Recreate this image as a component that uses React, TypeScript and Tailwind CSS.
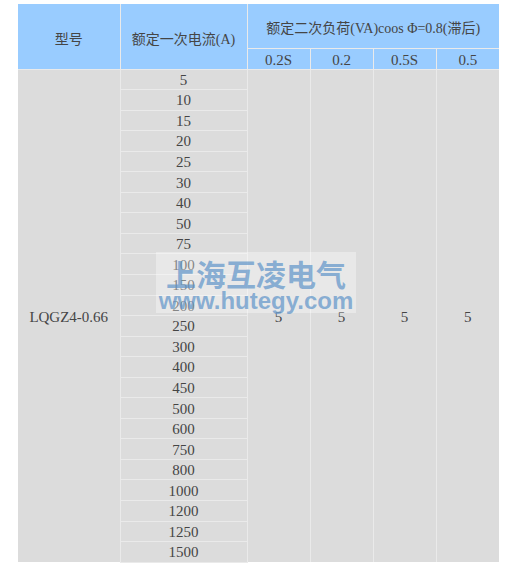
import React from "react";

const currents = [5, 10, 15, 20, 25, 30, 40, 50, 75, 100, 150, 200, 250, 300, 400, 450, 500, 600, 750, 800, 1000, 1200, 1250, 1500];

function Cn({ children }: { children: React.ReactNode }) {
  return <span className="font-['Noto_Sans_CJK_SC',sans-serif]">{children}</span>;
}

export default function App() {
  return (
    <div className="relative w-[513px] h-[570px] bg-white">
      <div className="pt-[4px] pl-[18px]">
        <table className="border-collapse table-fixed w-[481px] text-[#454545] text-[15px] font-['Liberation_Serif',serif]">
          <colgroup>
            <col className="w-[102px]" />
            <col className="w-[127px]" />
            <col className="w-[63px]" />
            <col className="w-[63px]" />
            <col className="w-[63px]" />
            <col className="w-[63px]" />
          </colgroup>
          <thead>
            <tr className="h-[44px] bg-[#99ccff]">
              <th rowSpan={2} className="font-normal text-[14px] border border-[#eaeaea] border-t-0 border-l-0 pt-[6px]"><Cn>型号</Cn></th>
              <th rowSpan={2} className="font-normal text-[14px] border border-[#eaeaea] border-t-0 pt-[6px]"><Cn>额定一次电流</Cn>(A)</th>
              <th colSpan={4} className="font-normal text-[14px] border border-[#eaeaea] border-t-0 border-r-0 pt-[4px]"><Cn>额定二次负荷</Cn>(VA)coos Φ=0.8(<Cn>滞后</Cn>)</th>
            </tr>
            <tr className="h-[20px] bg-[#99ccff]">
              <th className="font-normal border border-[#eaeaea] leading-[18px] pt-[2px]">0.2S</th>
              <th className="font-normal border border-[#eaeaea] leading-[18px] pt-[2px]">0.2</th>
              <th className="font-normal border border-[#eaeaea] leading-[18px] pt-[2px]">0.5S</th>
              <th className="font-normal border border-[#eaeaea] border-r-0 leading-[18px] pt-[2px]">0.5</th>
            </tr>
          </thead>
          <tbody className="bg-[#dcdcdc]">
            {currents.map((c, i) => (
              <tr key={c} className="h-[20.55px]">
                {i === 0 && (
                  <td rowSpan={24} className="text-center border border-[#eaeaea] border-l-0 border-b-0 pt-[2px]">LQGZ4-0.66</td>
                )}
                <td className="text-center border border-[#eaeaea] leading-[17px] pt-[2px] pb-0">{c}</td>
                {i === 0 && (
                  <>
                    <td rowSpan={24} className="text-center border border-[#eaeaea] border-b-0 pt-[2px]">5</td>
                    <td rowSpan={24} className="text-center border border-[#eaeaea] border-b-0 pt-[2px]">5</td>
                    <td rowSpan={24} className="text-center border border-[#eaeaea] border-b-0 pt-[2px]">5</td>
                    <td rowSpan={24} className="text-center border border-[#eaeaea] border-b-0 border-r-0 pt-[2px]">5</td>
                  </>
                )}
              </tr>
            ))}
          </tbody>
        </table>
      </div>
      <div className="absolute left-[156px] top-[252px] w-[200px] h-[61px] bg-white/35 flex flex-col items-center">
        <div className="text-[30px] leading-[36px] font-bold text-[#5d93c8]/70 mt-[3px] font-['Noto_Sans_CJK_SC',sans-serif]">
          上海互凌电气
        </div>
        <div className="text-[24px] leading-[20px] font-bold text-[#5d93c8]/70 font-['Liberation_Sans',Arial,sans-serif]">
          www.hutegy.com
        </div>
      </div>
    </div>
  );
}
